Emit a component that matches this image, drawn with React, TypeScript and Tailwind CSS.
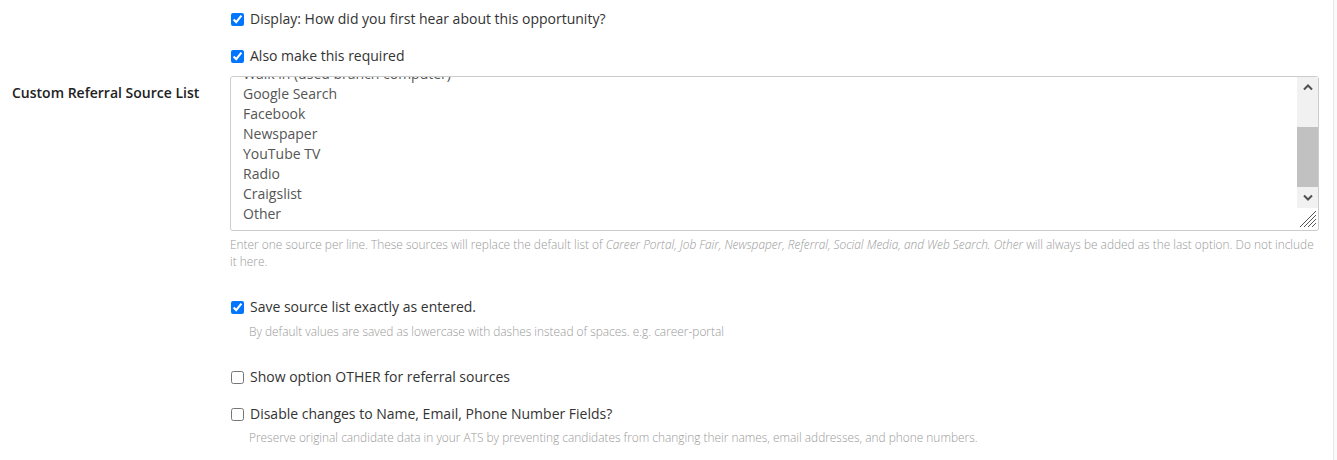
import { useEffect, useRef } from 'react'

const sources = [
  'Indeed',
  'Job Fair',
  'Employee Referral',
  'Walk in (used branch computer)',
  'Google Search',
  'Facebook',
  'Newspaper',
  'YouTube TV',
  'Radio',
  'Craigslist',
  'Other',
]

function CheckRow({ label, checked }: { label: string; checked?: boolean }) {
  return (
    <label className="flex items-center h-5 text-[14px] leading-5 text-[#333]">
      <input type="checkbox" defaultChecked={checked} className="w-[13px] h-[13px] m-0 ml-px mr-[6px]" />
      <span>{label}</span>
    </label>
  )
}

function Help({ children, indent }: { children: React.ReactNode; indent?: boolean }) {
  return (
    <p className={`text-[11.9px] leading-[17px] font-light text-[#999] ${indent ? 'pl-[19px]' : ''}`}>{children}</p>
  )
}

export default function App() {
  const listRef = useRef<HTMLTextAreaElement>(null)

  useEffect(() => {
    // start scrolled to the end of the list
    if (listRef.current) listRef.current.scrollTop = listRef.current.scrollHeight
  }, [])

  return (
    <div className="w-full h-[460px] bg-white flex overflow-hidden font-['Open_Sans',sans-serif]">
      <div className="flex-1 pl-3 pr-[14px] pt-[9px]">
        {/* Display options */}
        <div className="grid grid-cols-[218px_1fr]">
          <div />
          <div>
            <CheckRow label="Display: How did you first hear about this opportunity?" checked />
            <div className="mt-[17px]">
              <CheckRow label="Also make this required" checked />
            </div>
          </div>
        </div>

        {/* Custom source list */}
        <div className="grid grid-cols-[218px_1fr] mt-[10px]">
          <div className="pt-[7px] text-[14px] leading-5 font-semibold text-[#222]">Custom Referral Source List</div>
          <div>
            <div className="relative">
              <textarea
                ref={listRef}
                defaultValue={sources.join('\n')}
                className="block w-full h-[155px] border border-[#ccc] rounded-[3px] pl-3 pr-6 py-[6px] text-[14px] leading-5 text-[#555] outline-none resize-none"
              />
              {/* scrollbar + resize grip */}
              <div className="absolute top-px right-px w-[21px] flex flex-col">
                <div className="h-5 bg-[#f1f1f1] flex items-center justify-center">
                  <svg width="10" height="7" viewBox="0 0 10 7" className="mt-[1px]">
                    <path d="M1 5.5 L5 1.5 L9 5.5" fill="none" stroke="#505050" strokeWidth="2" />
                  </svg>
                </div>
                <div className="h-[90px] bg-[#f1f1f1] pt-[30px]">
                  <div className="h-[60px] bg-[#c1c1c1]" />
                </div>
                <div className="h-[21px] bg-[#f1f1f1] flex items-center justify-center">
                  <svg width="10" height="7" viewBox="0 0 10 7">
                    <path d="M1 1.5 L5 5.5 L9 1.5" fill="none" stroke="#505050" strokeWidth="2" />
                  </svg>
                </div>
                <div className="h-[21px] bg-white flex items-end justify-end pr-[2px] pb-[2px]">
                  <svg width="17" height="17" viewBox="0 0 17 17">
                    <path d="M17 1 L1 17 M17 5 L5 17 M17 9 L9 17 M17 13 L13 17" stroke="#555" strokeWidth="1" />
                  </svg>
                </div>
              </div>
            </div>
            <div className="mt-[5px]">
              <Help>
                Enter one source per line. These sources will replace the default list of{' '}
                <em>Career Portal, Job Fair, Newspaper, Referral, Social Media, and Web Search.</em>{' '}
                <em>Other</em> will always be added as the last option. Do not include it here.
              </Help>
            </div>

            <div className="mt-[27px]">
              <CheckRow label="Save source list exactly as entered." checked />
              <div className="mt-[6px]">
                <Help indent>By default values are saved as lowercase with dashes instead of spaces. e.g. career-portal</Help>
              </div>
            </div>

            <div className="mt-[27px]">
              <CheckRow label="Show option OTHER for referral sources" />
            </div>

            <div className="mt-[17px]">
              <CheckRow label="Disable changes to Name, Email, Phone Number Fields?" />
              <div className="mt-[5px]">
                <Help indent>
                  Preserve original candidate data in your ATS by preventing candidates from changing their names, email
                  addresses, and phone numbers.
                </Help>
              </div>
            </div>
          </div>
        </div>
      </div>
      <div className="w-[4px] border-l border-[#e6e6e6] bg-[#fafafa]" />
    </div>
  )
}
